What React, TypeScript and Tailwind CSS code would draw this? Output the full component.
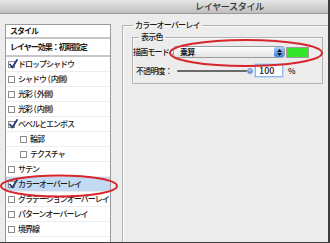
import React from "react";

type Row = { label: string; checked?: boolean; indent?: boolean; selected?: boolean };

const rows: Row[] = [
  { label: "ドロップシャドウ", checked: true },
  { label: "シャドウ (内側)" },
  { label: "光彩 (外側)" },
  { label: "光彩 (内側)" },
  { label: "ベベルとエンボス", checked: true },
  { label: "輪郭", indent: true },
  { label: "テクスチャ", indent: true },
  { label: "サテン" },
  { label: "カラーオーバーレイ", checked: true, selected: true },
  { label: "グラデーションオーバーレイ" },
  { label: "パターンオーバーレイ" },
  { label: "境界線" },
];

function Checkbox({ checked }: { checked?: boolean }) {
  return (
    <span className="relative inline-block w-[7px] h-[7px] shrink-0 border border-[#8c8c8c] bg-white">
      {checked && (
        <svg className="absolute left-[0px] top-[-3px]" width="9" height="10" viewBox="0 0 9 10">
          <path d="M1 5.5 L3.3 8.5 L8 1" fill="none" stroke="#1f3d7a" strokeWidth="1.8" strokeLinecap="round" strokeLinejoin="round" />
        </svg>
      )}
    </span>
  );
}

// "シャドウ (内側)" の括弧部分は詰めない
function Label({ text }: { text: string }) {
  const i = text.indexOf(" (");
  if (i < 0) return <span className="whitespace-nowrap">{text}</span>;
  return (
    <span className="whitespace-nowrap">
      {text.slice(0, i)}
      <span className="tracking-[0px]"> (</span>
      {text.slice(i + 2, -1)}
      <span className="tracking-[0px]">)</span>
    </span>
  );
}

export default function App() {
  return (
    <div className="relative w-[330px] h-[243px] overflow-hidden flex flex-col bg-[#ececec] border-r-2 border-b border-[#3c3c3c] font-['Noto_Sans_CJK_JP',sans-serif] font-medium text-[#1a1a1a]">
      {/* タイトルバー */}
      <div className="h-[14px] shrink-0 bg-gradient-to-b from-[#e6e6e6] to-[#bfbfbf] border-b border-[#9a9a9a] pl-[195px] text-[9px] leading-[13px] tracking-[-0.3px] text-[#333]">
        レイヤースタイル
      </div>

      <div className="flex flex-1 min-h-0 pt-[6px] pl-[5px]">
        {/* 左のリスト */}
        <div className="mt-[4px] w-[106px] shrink-0 bg-white border border-b-0 border-[#9a9a9a] flex flex-col text-[8px] tracking-[-1px]">
          <div className="h-[12px] flex items-center pl-[4px] font-bold">スタイル</div>
          <div className="h-[2px] bg-[#c6c6c6]" />
          <div className="h-[16px] flex items-center pl-[4px] font-bold">レイヤー効果：初期設定</div>
          <div className="h-[2px] bg-[#c6c6c6]" />
          {rows.map((r) => (
            <div
              key={r.label}
              className={`h-[15px] shrink-0 flex items-center gap-[3px] border-b border-[#ededed] ${
                r.indent ? "pl-[14px]" : "pl-[2px]"
              } ${r.selected ? "bg-[#c3daf5]" : ""}`}
            >
              <Checkbox checked={r.checked} />
              <Label text={r.label} />
            </div>
          ))}
        </div>

        {/* 右側のグループ */}
        <fieldset className="ml-[11px] flex-1 border-0 border-t border-l border-[#b2b2b2] shadow-[inset_1px_1px_0_#fafafa]">
          <legend className="ml-[10px] px-[2px] text-[8px] leading-[10px] tracking-[-0.8px]">カラーオーバーレイ</legend>
          <fieldset className="mt-[2px] ml-[9px] mr-[5px] border border-[#b2b2b2] shadow-[inset_1px_1px_0_#fafafa] pb-[6px] text-[8px] tracking-[-0.8px]">
            <legend className="ml-[6px] px-[2px] leading-[10px]">表示色</legend>
            <div className="flex items-center pt-[4px] h-[16px]">
              <span className="w-[39px] text-right whitespace-nowrap">描画モード：</span>
              <div className="ml-[1px] w-[112px] h-[12px] flex items-center justify-between rounded-[3px] border border-[#9c9c9c] bg-gradient-to-b from-white to-[#e4e4e4]">
                <span className="pl-[6px] leading-[10px] font-bold">乗算</span>
                <span className="w-[10px] h-[10px] rounded-[2px] bg-gradient-to-b from-[#a9cdf7] to-[#3a7fe0] flex flex-col items-center justify-center gap-[1px]">
                  <svg width="5" height="3" viewBox="0 0 5 3"><path d="M0 3 L2.5 0 L5 3 Z" fill="#111" /></svg>
                  <svg width="5" height="3" viewBox="0 0 5 3"><path d="M0 0 L2.5 3 L5 0 Z" fill="#111" /></svg>
                </span>
              </div>
              <span className="ml-[1px] w-[23px] h-[11px] bg-[#33e52b] border border-[#9c9c9c]" />
            </div>
            <div className="flex items-center mt-[6px] h-[13px]">
              <span className="w-[39px] text-right whitespace-nowrap">不透明度：</span>
              <div className="ml-[5px] w-[76px] h-[8px] flex items-center">
                <div className="flex-1 h-[2px] bg-[#6a6a6a] rounded-full" />
                <span className="w-[6px] h-[6px] rounded-full bg-gradient-to-b from-[#bcdcff] to-[#4a8ae0] border border-[#6f93c2]" />
              </div>
              <div className="ml-[2px] w-[28px] h-[13px] bg-white border border-[#8fb6e6] shadow-[0_0_0_1px_#c4dcf6] pl-[3px] text-[9px] leading-[11px] tracking-normal">100</div>
              <span className="ml-[5px]">%</span>
            </div>
          </fieldset>
        </fieldset>
      </div>

      {/* 赤い丸 */}
      <svg className="absolute left-0 top-0 pointer-events-none" width="330" height="243" viewBox="0 0 330 243">
        <ellipse cx="246" cy="53" rx="76" ry="13" fill="none" stroke="#d9262d" strokeWidth="2" />
        <ellipse cx="59" cy="186" rx="58" ry="10.5" fill="none" stroke="#d9262d" strokeWidth="2" />
      </svg>
    </div>
  );
}
